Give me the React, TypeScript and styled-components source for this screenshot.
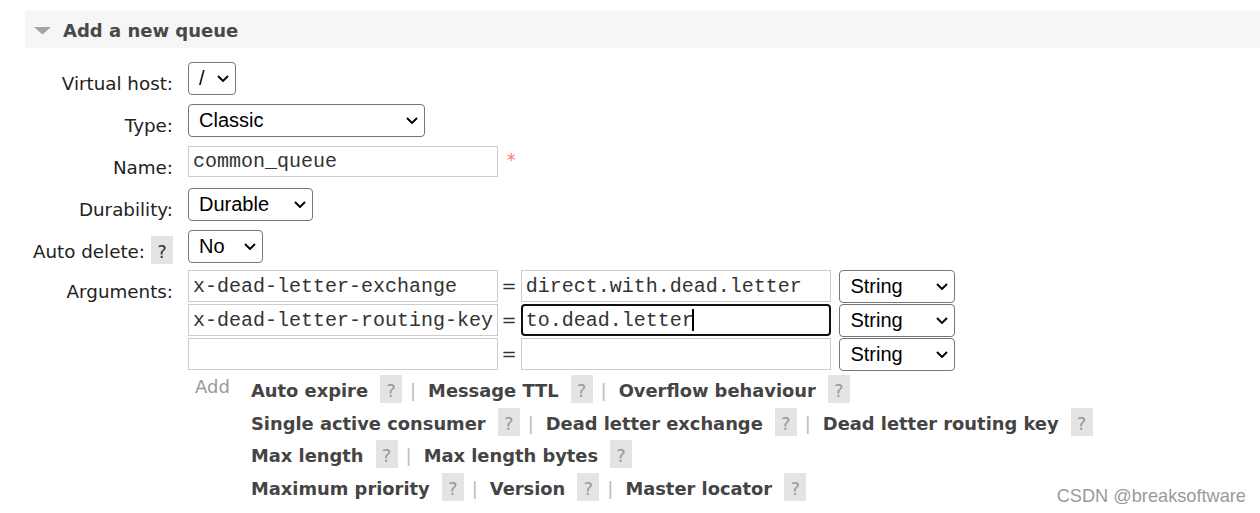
import React from 'react';
import styled, { createGlobalStyle } from 'styled-components';

const GlobalStyle = createGlobalStyle`
  html, body { margin: 0; padding: 0; background: #fff; }
  body {
    font-family: "DejaVu Sans", Verdana, sans-serif;
    font-size: 18px;
    color: #222;
  }
`;

const Page = styled.div`
  position: relative;
  width: 1260px;
  height: 513px;
  overflow: hidden;
  box-sizing: border-box;
  padding: 10.7px 0 0 25px;
`;

const SectionHeader = styled.div`
  display: flex;
  align-items: flex-start;
  height: 37px;
  box-sizing: border-box;
  padding: 9px 0 0 9px;
  background: #f6f6f6;
`;

const Triangle = styled.svg`
  flex: none;
  margin-top: 7.3px;
  margin-right: 12px;
`;

const Title = styled.h2`
  margin: 0;
  font-size: 18px;
  font-weight: bold;
  line-height: 21px;
  color: #484848;
`;

const Form = styled.div`
  margin-top: 14px;
`;

const FormRow = styled.div<{ $h: number }>`
  display: flex;
  align-items: flex-start;
  height: ${p => p.$h}px;
`;

const LabelCell = styled.div<{ $pt?: number }>`
  flex: none;
  width: 148px;
  margin-right: 15px;
  box-sizing: border-box;
  padding-top: ${p => (p.$pt ?? 11)}px;
  display: flex;
  justify-content: flex-end;
  align-items: baseline;
  font-size: 18.3px;
  line-height: 21px;
  white-space: nowrap;
  color: #222;
`;

const Help = styled.span<{ $dark?: boolean }>`
  display: inline-block;
  flex: none;
  width: 22px;
  height: 28px;
  box-sizing: border-box;
  padding-top: 5px;
  font-size: 18px;
  line-height: 21px;
  text-align: center;
  background: #e4e4e4;
  color: ${p => (p.$dark ? '#333' : '#9a9a9a')};
  font-weight: normal;
  margin-left: ${p => (p.$dark ? 6 : 12)}px;
`;

const SelectBox = styled.div<{ $w: number }>`
  position: relative;
  flex: none;
  width: ${p => p.$w}px;
  height: 33px;
  box-sizing: border-box;
  border: 1px solid #767676;
  border-radius: 4px;
  background: #fff;
  display: flex;
  align-items: center;
  justify-content: space-between;
  padding: 0 6px 0 10px;
  font-family: "Liberation Sans", Arial, sans-serif;
  font-size: 20px;
  line-height: 23px;
  color: #000;
  white-space: nowrap;
`;

const Chevron = styled.svg`
  flex: none;
`;

const TextInput = styled.input<{ $w: number }>`
  flex: none;
  width: ${p => p.$w}px;
  height: 31.5px;
  box-sizing: border-box;
  margin: 0;
  border: 1px solid #cccccc;
  border-radius: 0;
  padding: 0 4px;
  background: #fff;
  font-family: "Liberation Mono", "Courier New", monospace;
  font-size: 20px;
  color: #333;
  outline: none;
`;

const FocusedInput = styled.div<{ $w: number }>`
  flex: none;
  width: ${p => p.$w}px;
  height: 31.5px;
  box-sizing: border-box;
  border: 2px solid #101010;
  border-radius: 4px;
  padding: 0 3px;
  display: flex;
  align-items: center;
  background: #fff;
  font-family: "Liberation Mono", "Courier New", monospace;
  font-size: 20px;
  color: #333;
  white-space: pre;
`;

const Caret = styled.span`
  display: inline-block;
  width: 2px;
  height: 22px;
  margin-left: -2px;
  background: #000;
`;

const Required = styled.span`
  margin: 4px 0 0 9.5px;
  font-size: 17px;
  line-height: 21px;
  color: #f47a7a;
`;

const ArgsList = styled.div`
  display: flex;
  flex-direction: column;
`;

const ArgRow = styled.div`
  display: flex;
  align-items: flex-start;
  height: 34px;
`;

const Equals = styled.span`
  flex: none;
  width: 23.3px;
  height: 31.5px;
  padding-top: 1px;
  box-sizing: border-box;
  text-align: center;
  line-height: 30px;
  color: #333;
`;

const TypeGap = styled.span`
  flex: none;
  width: 8.6px;
`;

const AddCell = styled.div`
  flex: none;
  width: 63px;
  box-sizing: border-box;
  padding: 4px 0 0 7px;
  line-height: 21px;
  color: #999;
`;

const LinkList = styled.div`
  display: flex;
  flex-direction: column;
  padding-top: 2.7px;
`;

const LinkRow = styled.div`
  display: flex;
  align-items: baseline;
  height: 32.67px;
`;

const LinkText = styled.span`
  font-weight: bold;
  font-size: 17.88px;
  line-height: 21px;
  color: #444;
  white-space: nowrap;
`;

const Sep = styled.span`
  margin: 0 12px 0 8px;
  line-height: 21px;
  color: #bbb;
`;

const Watermark = styled.div`
  position: absolute;
  right: 14px;
  top: 486px;
  font-family: "Liberation Sans", Arial, sans-serif;
  font-size: 18.2px;
  line-height: 21px;
  color: #9a9a9a;
`;

const ChevronIcon = () => (
  <Chevron width="12" height="7" viewBox="0 0 12 7">
    <polyline points="1,1 6,6 11,1" fill="none" stroke="#000" strokeWidth="1.9" />
  </Chevron>
);

const Select = ({ w, value }: { w: number; value: string }) => (
  <SelectBox $w={w} role="combobox">
    <span>{value}</span>
    <ChevronIcon />
  </SelectBox>
);

const linkRows: string[][] = [
  ['Auto expire', 'Message TTL', 'Overflow behaviour'],
  ['Single active consumer', 'Dead letter exchange', 'Dead letter routing key'],
  ['Max length', 'Max length bytes'],
  ['Maximum priority', 'Version', 'Master locator'],
];

export default function App() {
  return (
    <>
      <GlobalStyle />
      <Page>
        <SectionHeader>
          <Triangle width="17" height="8" viewBox="0 0 17 8">
            <polygon points="0,0 17,0 8.5,7.5" fill="#a3a3a3" />
          </Triangle>
          <Title>Add a new queue</Title>
        </SectionHeader>

        <Form>
          <FormRow $h={42}>
            <LabelCell>Virtual host:</LabelCell>
            <Select w={48} value="/" />
          </FormRow>
          <FormRow $h={42}>
            <LabelCell>Type:</LabelCell>
            <Select w={237.4} value="Classic" />
          </FormRow>
          <FormRow $h={42}>
            <LabelCell>Name:</LabelCell>
            <TextInput $w={309.5} defaultValue="common_queue" readOnly />
            <Required>*</Required>
          </FormRow>
          <FormRow $h={42}>
            <LabelCell>Durability:</LabelCell>
            <Select w={125} value="Durable" />
          </FormRow>
          <FormRow $h={40.6}>
            <LabelCell $pt={6}>
              Auto delete:<Help $dark>?</Help>
            </LabelCell>
            <Select w={75} value="No" />
          </FormRow>
          <FormRow $h={102}>
            <LabelCell>Arguments:</LabelCell>
            <ArgsList>
              <ArgRow>
                <TextInput $w={309.5} defaultValue="x-dead-letter-exchange" readOnly />
                <Equals>=</Equals>
                <TextInput $w={310} defaultValue="direct.with.dead.letter" readOnly />
                <TypeGap />
                <Select w={116} value="String" />
              </ArgRow>
              <ArgRow>
                <TextInput $w={309.5} defaultValue="x-dead-letter-routing-key" readOnly />
                <Equals>=</Equals>
                <FocusedInput $w={310}>
                  to.dead.letter<Caret />
                </FocusedInput>
                <TypeGap />
                <Select w={116} value="String" />
              </ArgRow>
              <ArgRow>
                <TextInput $w={309.5} defaultValue="" readOnly />
                <Equals>=</Equals>
                <TextInput $w={310} defaultValue="" readOnly />
                <TypeGap />
                <Select w={116} value="String" />
              </ArgRow>
            </ArgsList>
          </FormRow>
          <FormRow $h={131}>
            <LabelCell />
            <AddCell>Add</AddCell>
            <LinkList>
              {linkRows.map((row, i) => (
                <LinkRow key={i}>
                  {row.map((name, j) => (
                    <React.Fragment key={name}>
                      {j > 0 && <Sep>|</Sep>}
                      <LinkText>{name}</LinkText>
                      <Help>?</Help>
                    </React.Fragment>
                  ))}
                </LinkRow>
              ))}
            </LinkList>
          </FormRow>
        </Form>

        <Watermark>CSDN @breaksoftware</Watermark>
      </Page>
    </>
  );
}
